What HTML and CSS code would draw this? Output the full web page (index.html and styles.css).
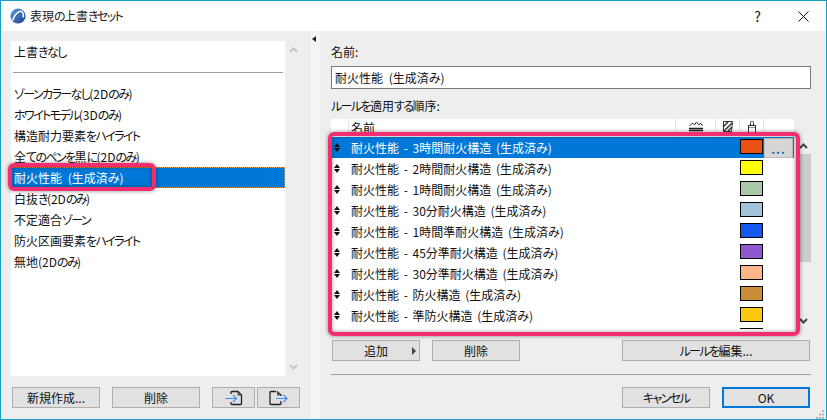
FILE: index.html
```html
<!DOCTYPE html>
<html lang="ja">
<head>
<meta charset="utf-8">
<title>表現の上書きセット</title>
<link rel="stylesheet" href="styles.css">
</head>
<body>
<div class="window">
  <header class="titlebar">
    <svg class="logo" width="16" height="16" viewBox="0 0 16 16"><defs><linearGradient id="lg" x1="0" y1="0" x2="1" y2="1"><stop offset="0" stop-color="#5f9be8"/><stop offset="1" stop-color="#1c3f86"/></linearGradient></defs><circle cx="8" cy="8" r="7.6" fill="url(#lg)"/><path d="M2.5 12.5C4.5 6.5 8.5 3 11 3.2c1.700.2 2.400 2.600 2.300 6.300" fill="none" stroke="#fff" stroke-width="1.500"/></svg>
    <span class="title">表現<span class="k">の</span>上書<span class="k">きセット</span></span>
    <span class="help">?</span>
    <svg class="close" width="11" height="11" viewBox="0 0 11 11"><path d="M.5.5l10 10M10.500.5l-10 10" stroke="#111" stroke-width="1" fill="none"/></svg>
  </header>
  <div class="body">
    <section class="left">
      <div class="list-row">
        <ul class="list">
          <li>上書<span class="k">きなし</span></li>
          <li class="sep"><hr></li>
          <li><span class="k">ゾーンカラーなし</span>(2D<span class="k">のみ</span>)</li>
          <li><span class="k">ホワイトモデル</span>(3D<span class="k">のみ</span>)</li>
          <li>構造耐力要素<span class="k">をハイライト</span></li>
          <li>全<span class="k">てのペンを</span>黒<span class="k">に</span>(2D<span class="k">のみ</span>)</li>
          <li class="selected">耐火性能 (生成済み)</li>
          <li>白抜<span class="k">き</span>(2D<span class="k">のみ</span>)</li>
          <li>不定適合<span class="k">ゾーン</span></li>
          <li>防火区画要素<span class="k">をハイライト</span></li>
          <li>無地(2D<span class="k">のみ</span>)</li>
        </ul>
        <div class="list-scroll">
          <svg width="9" height="6" viewBox="0 0 9 6"><path d="M1 5l3.500-3.500L8 5" fill="none" stroke="#c4c4c4" stroke-width="2"/></svg>
          <svg width="9" height="6" viewBox="0 0 9 6"><path d="M1 1l3.500 3.500L8 1" fill="none" stroke="#c4c4c4" stroke-width="2"/></svg>
        </div>
      </div>
      <div class="left-buttons">
        <button class="btn">新規作成...</button>
        <button class="btn">削除</button>
        <button class="btn icon-btn"><svg width="18" height="16" viewBox="0 0 18 16"><path d="M6 4V2.500A1 1 0 0 1 7 1.500h6l3.500 3.500v8.500a1 1 0 0 1-1 1H7a1 1 0 0 1-1-1V12" fill="none" stroke="#222" stroke-width="1.300"/><path d="M12.500 1.500l4 4h-4z" fill="#555"/><path d="M.5 8.500h11M8 5l3.500 3.500L8 12" fill="none" stroke="#3f8cf5" stroke-width="1.200"/></svg></button>
        <button class="btn icon-btn"><svg width="19" height="16" viewBox="0 0 19 16"><path d="M7 1.500H2A1 1 0 0 0 1 2.500v11a1 1 0 0 0 1 1h9a1 1 0 0 0 1-1V11M12 6V5L8 1.500" fill="none" stroke="#222" stroke-width="1.300"/><path d="M8 1.500l4 4H8z" fill="#555"/><path d="M7 8.500h11M14.500 5L18 8.500 14.500 12" fill="none" stroke="#3f8cf5" stroke-width="1.200"/></svg></button>
      </div>
      <span class="callout callout-left"></span>
    </section>
    <div class="splitter"><span class="split-arrow"></span></div>
    <section class="right">
      <label class="field-label">名前:</label>
      <div class="input">耐火性能 (生成済み)</div>
      <label class="field-label order-label"><span class="k">ルールを</span>適用<span class="k">する</span>順序:</label>
      <div class="table-wrap">
        <div class="table">
          <div class="thead">
            <span class="c-handle"></span>
            <span class="c-name">名前</span>
            <span class="c-i1"><svg width="14" height="11" viewBox="0 0 14 11"><path d="M.5 5L3.500 2l2 2L7.500 1l2.500 3 1.500-2 2 3" fill="none" stroke="#333" stroke-width="1"/><path d="M0 7.500h14M0 9.500h14" stroke="#222" stroke-width="1.300"/></svg></span>
            <span class="c-i2"><svg width="11" height="11" viewBox="0 0 11 11"><path d="M1.500.5h9l-1 10h-8z" fill="#fff" stroke="#333"/><path d="M1 6L6 1M2 10l8-8M6 10l4-4" stroke="#333" stroke-width="1.500"/></svg></span>
            <span class="c-i3"><svg width="8" height="12" viewBox="0 0 8 12"><path d="M2.500 4V1.500a1.500 1.500 0 0 1 3 0V4" fill="none" stroke="#333"/><rect x=".5" y="4.500" width="7" height="2.500" fill="#fff" stroke="#333"/><path d="M.5 7v4.500h7V7" fill="#fff" stroke="#333"/></svg></span>
            <span class="c-rest"></span>
          </div>
          <div class="trow selected"><span class="handle"></span><span class="name">耐火性能 - 3時間耐火構造 (生成済み)</span><span class="swatch s1"></span><span class="more">...</span></div>
          <div class="trow"><span class="handle"></span><span class="name">耐火性能 - 2時間耐火構造 (生成済み)</span><span class="swatch s2"></span></div>
          <div class="trow"><span class="handle"></span><span class="name">耐火性能 - 1時間耐火構造 (生成済み)</span><span class="swatch s3"></span></div>
          <div class="trow"><span class="handle"></span><span class="name">耐火性能 - 30分耐火構造 (生成済み)</span><span class="swatch s4"></span></div>
          <div class="trow"><span class="handle"></span><span class="name">耐火性能 - 1時間準耐火構造 (生成済み)</span><span class="swatch s5"></span></div>
          <div class="trow"><span class="handle"></span><span class="name">耐火性能 - 45分準耐火構造 (生成済み)</span><span class="swatch s6"></span></div>
          <div class="trow"><span class="handle"></span><span class="name">耐火性能 - 30分準耐火構造 (生成済み)</span><span class="swatch s7"></span></div>
          <div class="trow"><span class="handle"></span><span class="name">耐火性能 - 防火構造 (生成済み)</span><span class="swatch s8"></span></div>
          <div class="trow"><span class="handle"></span><span class="name">耐火性能 - 準防火構造 (生成済み)</span><span class="swatch s9"></span></div>
          <div class="trow last"><span class="swatch s10"></span></div>
        </div>
        <div class="tscroll">
          <svg class="chev-up" width="9" height="6" viewBox="0 0 9 6"><path d="M1 5l3.500-3.500L8 5" fill="none" stroke="#444" stroke-width="2"/></svg>
          <div class="thumb"></div>
          <svg class="chev-down" width="9" height="6" viewBox="0 0 9 6"><path d="M1 1l3.500 3.500L8 1" fill="none" stroke="#444" stroke-width="2"/></svg>
        </div>
        <span class="callout callout-right"></span>
      </div>
      <div class="table-buttons">
        <button class="btn btn-add">追加<span class="tri"></span></button>
        <button class="btn">削除</button>
        <button class="btn btn-wide"><span class="k">ルールを</span>編集...</button>
      </div>
      <hr class="divider">
      <div class="dialog-buttons">
        <button class="btn"><span class="k">キャンセル</span></button>
        <button class="btn btn-ok">OK</button>
      </div>
    </section>
  </div>
  <svg class="grip" width="10" height="9" viewBox="0 0 10 9"><path d="M7 0h2v2H7zM4 3.500h2v2H4zM7 3.500h2v2H7zM1 7h2v2H1zM4 7h2v2H4zM7 7h2v2H7z" fill="#b5b5b5"/></svg>
</div>
</body>
</html>
```
FILE: styles.css
```css
* { box-sizing: border-box; }
html, body { margin: 0; padding: 0; }
body {
  font-family: "Noto Sans CJK JP", "Liberation Sans", sans-serif;
  font-size: 12px;
  line-height: 16px;
  color: #111;
  font-feature-settings: "palt";
  overflow: hidden;
}
.k { letter-spacing: -1.6px; }
.window {
  position: relative;
  width: 827px;
  height: 420px;
  border: 1px solid #18a0c4;
  background: #eeeeee;
  display: flex;
  flex-direction: column;
}
.titlebar {
  height: 30px;
  flex: none;
  background: #fff;
  display: flex;
  align-items: center;
  padding: 0 17px 0 9px;
}
.logo { margin-right: 4px; }
.title { flex: 1; color: #222; }
.help { margin-right: 37px; font-size: 14px; }
.body { flex: 1; display: flex; min-height: 0; }

.left { position: relative; width: 310px; flex: none; padding: 10px 0 0 10px; }
.list-row { display: flex; height: 335px; }
.list { list-style: none; margin: 0; padding: 0; width: 274px; background: #fff; }
.list li { height: 21px; line-height: 21px; padding-left: 3px; white-space: nowrap; }
.list li.sep { padding: 10px 2px 0; }
.list hr { margin: 0; border: 0; height: 1px; background: #a0a0a0; }
.list li.selected { background: #0078d7; color: #fff; outline: 1px dotted #e8a050; outline-offset: -1px; word-spacing: 3px; }
.list-scroll {
  width: 16px;
  display: flex;
  flex-direction: column;
  justify-content: space-between;
  align-items: center;
  padding: 6px 0 6px;
}
.left-buttons { display: flex; margin-top: 11px; padding-left: 1px; }
.left-buttons .btn { margin-right: 12px; }
.left-buttons .icon-btn { width: 43px; margin-right: 2px; }

.btn {
  width: 88px;
  height: 21px;
  padding: 0;
  border: 1px solid #adadad;
  background: #e1e1e1;
  font: inherit;
  color: #111;
  font-feature-settings: "palt";
  display: flex;
  align-items: center;
  justify-content: center;
  position: relative;
}
.callout { position: absolute; border: 4px solid #f52d70; pointer-events: none; box-shadow: 0 0 4px rgba(0,0,0,.45), inset 0 0 4px rgba(0,0,0,.4); }
.callout-left { left: 7px; top: 132px; width: 148px; height: 28px; border-radius: 6px; }
.callout-right { left: -3px; top: 13px; width: 472px; height: 204px; border-radius: 6px; }

.splitter { width: 9px; flex: none; background: #f4f4f4; position: relative; }
.split-arrow {
  position: absolute; left: 1px; top: 5px;
  border-style: solid; border-width: 3px 4px 3px 0;
  border-color: transparent #222 transparent transparent;
}

.right { flex: 1; padding: 13px 15px 0 11px; min-width: 0; }
.field-label { display: block; height: 16px; }
.input {
  height: 23px;
  margin-top: 6px;
  border: 1px solid #7a7a7a;
  background: #fff;
  padding-left: 3px;
  line-height: 21px;
  word-spacing: 3px;
}
.order-label { margin-top: 9px; }
.table-wrap { position: relative; display: flex; margin-top: 5px; height: 213px; }
.table { width: 463px; background: #fff; overflow: hidden; }
.thead { height: 18px; display: flex; }
.thead > span { height: 18px; border-right: 1px solid #e4e4e4; display: flex; align-items: center; justify-content: center; padding-bottom: 3px; }
.c-handle { width: 18px; }
.thead .c-name { width: 327px; justify-content: flex-start; padding-left: 2px; padding-bottom: 0; line-height: 18px; }
.c-i1 { width: 40px; }
.c-i2 { width: 24px; }
.c-i3 { width: 24px; }
.thead .c-rest { width: 30px; border-right: 0; }

.trow { height: 21px; display: flex; align-items: flex-start; position: relative; }
.trow.last { justify-content: flex-end; }
.handle { width: 20px; height: 21px; flex: none; position: relative; }
.handle::before, .handle::after {
  content: ""; position: absolute; left: 3px;
  border-style: solid; border-color: transparent;
}
.handle::before { top: 6px; border-width: 0 3px 4px; border-bottom-color: #111; }
.handle::after { top: 11px; border-width: 4px 3px 0; border-top-color: #111; }
.name { flex: none; width: 389px; line-height: 21px; white-space: nowrap; word-spacing: 2px; }
.swatch { width: 23px; height: 15px; margin-top: 2px; border: 1px solid #000; flex: none; }
.trow.last .swatch { margin-right: 31px; border-width: 1px 0 0; }
.trow.selected { background: #0078d7; color: #fff; }
.trow.selected .handle::before { border-bottom-color: #0a0a0a; }
.trow.selected .handle::after { border-top-color: #0a0a0a; }
.more {
  width: 29px; height: 20px; margin: 1px 0 0 1px;
  background: #d6d6d6; border: 1px solid #bcbcbc;
  color: #0a5fb0; text-align: center; line-height: 20px;
  font-weight: 700; letter-spacing: 1px;
}
.s1 { background: #e95114; }
.s2 { background: #ffff00; }
.s3 { background: #a8c8a8; }
.s4 { background: #a3c4d8; }
.s5 { background: #1558ee; }
.s6 { background: #8e58d0; }
.s7 { background: #ffb48a; }
.s8 { background: #c98d36; }
.s9 { background: #fcc910; }
.s10 { background: #fff; }

.tscroll { width: 16px; margin-left: 1px; display: flex; flex-direction: column; align-items: center; position: relative; }
.chev-up { margin-top: 24px; }
.thumb { width: 15px; height: 108px; background: #cccccc; margin-top: 5px; }
.chev-down { margin-top: 56px; }

.table-buttons { display: flex; margin-top: 8px; padding: 0 1px; }
.table-buttons .btn { margin-right: 12px; }
.table-buttons .btn-wide { width: 188px; margin: 0 0 0 auto; }
.btn-add .tri {
  position: absolute; right: 3px; top: 6px;
  border-style: solid; border-width: 4px 0 4px 4px;
  border-color: transparent transparent transparent #444;
}
.divider { margin: 13px 0 0; border: 0; height: 1px; background: #a0a0a0; }
.dialog-buttons { display: flex; justify-content: flex-end; gap: 12px; margin-top: 12px; padding-right: 1px; }
.btn-ok { border: 2px solid #0078d7; }
.grip { position: absolute; right: 1px; bottom: 0; }
```
